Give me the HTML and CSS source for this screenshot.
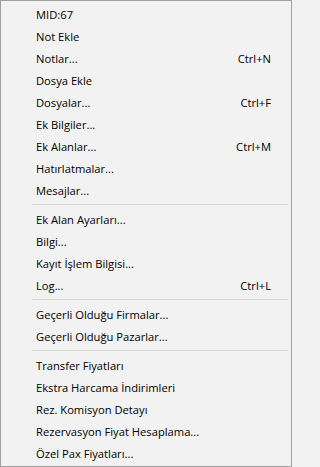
FILE: index.html
```html
<!DOCTYPE html>
<html>
<head>
<meta charset="utf-8">
<link rel="stylesheet" href="styles.css">
</head>
<body>
<div class="menu">
  <div class="item"><span class="label">MID:67</span></div>
  <div class="item"><span class="label">Not Ekle</span></div>
  <div class="item"><span class="label">Notlar...</span><span class="key">Ctrl+N</span></div>
  <div class="item"><span class="label">Dosya Ekle</span></div>
  <div class="item"><span class="label">Dosyalar...</span><span class="key">Ctrl+F</span></div>
  <div class="item"><span class="label">Ek Bilgiler...</span></div>
  <div class="item"><span class="label">Ek Alanlar...</span><span class="key">Ctrl+M</span></div>
  <div class="item"><span class="label">Hatırlatmalar...</span></div>
  <div class="item"><span class="label">Mesajlar...</span></div>
  <div class="sep"></div>
  <div class="item"><span class="label">Ek Alan Ayarları...</span></div>
  <div class="item"><span class="label">Bilgi...</span></div>
  <div class="item"><span class="label">Kayıt İşlem Bilgisi...</span></div>
  <div class="item"><span class="label">Log...</span><span class="key">Ctrl+L</span></div>
  <div class="sep"></div>
  <div class="item"><span class="label">Geçerli Olduğu Firmalar...</span></div>
  <div class="item"><span class="label">Geçerli Olduğu Pazarlar...</span></div>
  <div class="sep"></div>
  <div class="item"><span class="label">Transfer Fiyatları</span></div>
  <div class="item"><span class="label">Ekstra Harcama İndirimleri</span></div>
  <div class="item"><span class="label">Rez. Komisyon Detayı</span></div>
  <div class="item"><span class="label">Rezervasyon Fiyat Hesaplama...</span></div>
  <div class="item"><span class="label">Özel Pax Fiyatları...</span></div>
</div>
</body>
</html>
```
FILE: styles.css
```css
html, body {
  margin: 0;
  padding: 0;
  background: #f2f2f2;
}
.menu {
  width: 292px;
  height: 467px;
  box-sizing: border-box;
  border: 1px solid #a0a0a0;
  background: #f2f2f2;
  padding: 2px;
  font-family: "Open Sans", "DejaVu Sans", sans-serif;
  font-size: 11.2px;
  color: #000;
  display: flex;
  flex-direction: column;
}
.item {
  height: 22px;
  display: flex;
  align-items: center;
  justify-content: space-between;
  padding-left: 33px;
  padding-right: 18px;
  white-space: nowrap;
}
.sep {
  height: 1px;
  margin: 3px 1px 3px 29px;
  background: #d7d7d7;
}
```
